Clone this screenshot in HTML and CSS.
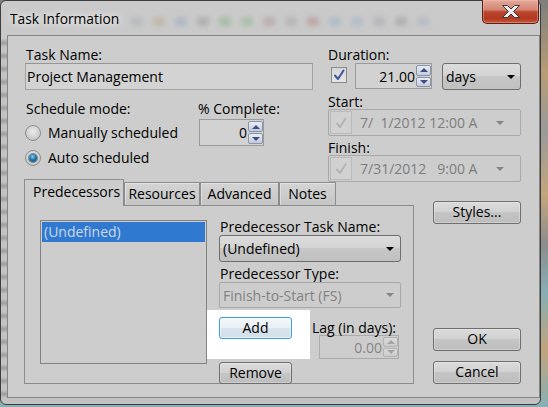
FILE: index.html
```html
<!DOCTYPE html>
<html lang="en">
<head>
<meta charset="utf-8">
<title>Task Information</title>
<link rel="stylesheet" href="styles.css">
</head>
<body>
<div class="window">
  <div class="titlebar">
    <span class="title">Task Information</span>
    <div class="glass" aria-hidden="true">
      <i class="g1"></i><i class="g2"></i><i class="g3"></i><i class="g4"></i><i class="g5"></i><i class="g6"></i><i class="g7"></i><i class="g8"></i><i class="g9"></i><i class="g10"></i><i class="g11"></i><i class="g12"></i><i class="g13"></i><i class="g14"></i>
    </div>
    <div class="close">
      <svg width="18" height="13" viewBox="0 0 18 13"><polygon points="0.5,0.5 5.5,0.5 9,4 12.5,0.5 17.5,0.5 11.5,6.5 17.5,12.5 12.5,12.5 9,9 5.5,12.5 0.5,12.5 6.5,6.5" fill="#ececec" stroke="#3c3c3c" stroke-width="1" stroke-linejoin="round"/></svg>
    </div>
  </div>

  <div class="client">
    <div class="layout">
      <div class="general">
        <div class="lbl name-lbl">Task Name:</div>
        <div class="textbox">Project Management</div>
        <div class="sched-row">
          <div class="sched">
            <div class="lbl">Schedule mode:</div>
            <div class="radios">
              <div class="radio-row"><span class="radio"></span><span>Manually scheduled</span></div>
              <div class="radio-row"><span class="radio on"></span><span>Auto scheduled</span></div>
            </div>
          </div>
          <div class="complete">
            <div class="lbl">% Complete:</div>
            <div class="spin pct">
              <span class="val">0</span>
              <span class="spin-btns"><span class="sb up"></span><span class="sb down"></span></span>
            </div>
          </div>
        </div>
      </div>

      <div class="dates">
        <div class="lbl">Duration:</div>
        <div class="dur-row">
          <span class="chk">
            <svg width="14" height="14" viewBox="0 0 14 14"><path d="M3 7.5 L6 11 L11.5 2.5" fill="none" stroke="#3b569a" stroke-width="2" stroke-linecap="round" stroke-linejoin="round"/></svg>
          </span>
          <div class="spin dur">
            <span class="val">21.00</span>
            <span class="spin-btns"><span class="sb up"></span><span class="sb down"></span></span>
          </div>
          <div class="dd days"><span>days</span><span class="arrow"></span></div>
        </div>
        <div class="lbl small">Start:</div>
        <div class="datefield">
          <span class="dchk">
            <svg width="14" height="14" viewBox="0 0 14 14"><path d="M3 7.5 L6 11 L11.5 2.5" fill="none" stroke="#b3b3b3" stroke-width="2" stroke-linecap="round" stroke-linejoin="round"/></svg>
          </span>
          <span class="dtext">7/  1/2012 12:00 A</span>
          <span class="arrow grey"></span>
        </div>
        <div class="lbl small">Finish:</div>
        <div class="datefield">
          <span class="dchk">
            <svg width="14" height="14" viewBox="0 0 14 14"><path d="M3 7.5 L6 11 L11.5 2.5" fill="none" stroke="#b3b3b3" stroke-width="2" stroke-linecap="round" stroke-linejoin="round"/></svg>
          </span>
          <span class="dtext">7/31/2012   9:00 A</span>
          <span class="arrow grey"></span>
        </div>
      </div>

      <div class="tabs">
        <div class="tabstrip">
          <div class="tab active">Predecessors</div>
          <div class="tab t-res">Resources</div>
          <div class="tab t-adv">Advanced</div>
          <div class="tab t-notes">Notes</div>
        </div>
        <div class="panel">
          <div class="listbox">
            <div class="item sel">(Undefined)</div>
          </div>
          <div class="pred">
            <div class="plbl first">Predecessor Task Name:</div>
            <div class="dd pdd"><span>(Undefined)</span><span class="arrow"></span></div>
            <div class="plbl second">Predecessor Type:</div>
            <div class="dd pdd disabled"><span>Finish-to-Start (FS)</span><span class="arrow grey"></span></div>
            <div class="add-row">
              <div class="highlight"><div class="btn add">Add</div></div>
              <div class="lag">
                <div class="lag-lbl">Lag (in days):</div>
                <div class="spin lagspin disabled">
                  <span class="val">0.00</span>
                  <span class="spin-btns"><span class="sb up"></span><span class="sb down"></span></span>
                </div>
              </div>
            </div>
            <div class="btn remove">Remove</div>
          </div>
        </div>
      </div>

      <div class="side">
        <div class="btn styles">Styles...</div>
        <div class="btn ok">OK</div>
        <div class="btn cancel">Cancel</div>
      </div>
    </div>
  </div>
</div>
</body>
</html>
```

FILE: styles.css
```css
html, body {
  margin: 0;
  padding: 0;
}

body {
  width: 548px;
  height: 407px;
  overflow: hidden;
  font-family: "Open Sans", "Noto Sans", "DejaVu Sans", sans-serif;
  font-size: 14px;
  color: #000;
  background: linear-gradient(#7e7e7e 0%, #b99c74 18%, #9a9a9a 32%, #c4a57c 48%, #8d8d8d 60%, #86aeb4 72%, #c1a47c 86%, #86b0b6 100%);
}

/* ---------- window frame ---------- */
.window {
  width: 541px;
  height: 405px;
  box-sizing: border-box;
  border: 1px solid #3d3d3d;
  border-radius: 6px;
  background:
    repeating-linear-gradient(#c3c3c3 0px, #9e9e9e 4px, #c3c3c3 8px, #c3c3c3 13px) 0 38px / 6px 360px no-repeat,
    linear-gradient(#cacaca, #c2c2c2);
  display: flex;
  flex-direction: column;
}

.titlebar {
  height: 34px;
  display: flex;
  align-items: flex-start;
  padding-left: 9px;
}

.title {
  margin-top: 8px;
  font-size: 13.8px;
  line-height: 19px;
  text-shadow: 0 0 6px rgba(255, 255, 255, 0.95), 0 0 10px rgba(255, 255, 255, 0.7);
}

.glass {
  display: flex;
  gap: 10px;
  margin: 16px 0 0 12px;
  opacity: 0.28;
  filter: blur(2.5px);
}

.glass i {
  display: block;
  width: 12px;
  height: 9px;
  border-radius: 3px;
  background: #8d96a6;
}
.glass .g2 { background: #a88d60; }
.glass .g3 { background: #6f8fc0; }
.glass .g4 { background: #707070; }
.glass .g5 { background: #4f9a4f; }
.glass .g6 { background: #5aa85a; }
.glass .g7 { background: #9a6a6a; }
.glass .g8 { background: #8a8a8a; }
.glass .g9 { background: #a05050; }
.glass .g10 { background: #6a9ac0; }
.glass .g11 { background: #7aa0c8; }
.glass .g12 { background: #8a8a9a; }
.glass .g13 { background: #707070; }
.glass .g14 { background: #8a9ab8; }

.close {
  margin: -1px 1px 0 auto;
  width: 57px;
  height: 24px;
  box-sizing: border-box;
  border: 1px solid #5a2116;
  border-top: none;
  border-radius: 0 0 5px 5px;
  background: linear-gradient(#e3aa9d 0%, #d48572 42%, #b9432b 52%, #b23a22 80%, #c9583a 100%);
  box-shadow: inset 0 0 0 1px rgba(255, 200, 190, 0.35);
  display: flex;
  align-items: center;
  justify-content: center;
}

/* ---------- client area ---------- */
.client {
  margin-left: 6px;
  width: 533px;
  height: 363px;
  box-sizing: border-box;
  border: 1px solid #858585;
  background: #cdcdcd;
  padding: 11px 0 0 16px;
}

.layout {
  display: grid;
  grid-template-columns: 304px 105px 88px;
  grid-template-rows: 132px 205px;
}

.lbl {
  line-height: 16px;
  white-space: nowrap;
}
.lbl.small {
  line-height: 15px;
  margin-top: 4px;
}

/* general column */
.general {
  grid-column: 1;
  grid-row: 1;
}

.name-lbl {
  margin-left: 2px;
}

.textbox {
  margin-left: 1px;
  width: 288px;
  height: 27px;
  box-sizing: border-box;
  border: 1px solid #a3a3a3;
  border-top-color: #959595;
  background: #d3d3d3;
  padding-left: 1px;
  line-height: 25px;
  white-space: nowrap;
}

.sched-row {
  display: flex;
  margin-top: 11px;
}

.sched {
  width: 174px;
}
.sched > .lbl {
  margin-left: 2px;
}

.radios {
  margin-top: 3px;
}

.radio-row {
  height: 25px;
  display: flex;
  align-items: center;
  line-height: 19px;
}

.radio {
  width: 16px;
  height: 16px;
  box-sizing: border-box;
  margin: 0 7px 0 1px;
  border-radius: 50%;
  border: 1px solid #8e8e8e;
  background: radial-gradient(circle at 50% 40%, #ececec 0%, #d2d2d2 55%, #b4b4b4 100%);
  display: flex;
  align-items: center;
  justify-content: center;
}
.radio.on::after {
  content: "";
  width: 8px;
  height: 8px;
  border-radius: 50%;
  background: radial-gradient(circle at 45% 35%, #8fd0ef 0%, #2a7fae 40%, #0b3f62 100%);
  box-shadow: 0 0 0 1px rgba(20, 60, 90, 0.5);
}

.complete .spin {
  margin: 2px 0 0 1px;
}

/* spinners */
.spin {
  display: flex;
  box-sizing: border-box;
  border: 1px solid #9b9b9b;
  background: #d2d2d2;
  line-height: 19px;
}
.spin .val {
  flex: 1;
  align-self: center;
  text-align: right;
  margin-right: 1px;
}
.spin-btns {
  width: 15px;
  display: flex;
  flex-direction: column;
  gap: 1px;
  padding: 1px 0;
}
.sb {
  flex: 1;
  box-sizing: border-box;
  border: 1px solid #8993aa;
  border-radius: 2px;
  background: linear-gradient(#e9edf4, #c3cbdc);
  display: flex;
  align-items: center;
  justify-content: center;
}
.sb.up::after {
  content: "";
  border-left: 4px solid transparent;
  border-right: 4px solid transparent;
  border-bottom: 4px solid #3d4e80;
}
.sb.down::after {
  content: "";
  border-left: 4px solid transparent;
  border-right: 4px solid transparent;
  border-top: 4px solid #3d4e80;
}

.spin.pct {
  width: 65px;
  height: 27px;
}

.spin.disabled {
  border-color: #aaaaaa;
  background: #cdcdcd;
  color: #858585;
}
.spin.disabled .sb {
  border-color: #b3b3b3;
  background: linear-gradient(#dadada, #cbcbcb);
}
.spin.disabled .sb.up::after { border-bottom-color: #a3a3a3; }
.spin.disabled .sb.down::after { border-top-color: #a3a3a3; }

/* dates column */
.dates {
  grid-column: 2 / 4;
  grid-row: 1;
  align-self: start;
}

.dur-row {
  display: flex;
  height: 27px;
}

.chk {
  width: 16px;
  height: 16px;
  box-sizing: border-box;
  margin: 4px 0 0 3px;
  border: 1px solid #8a8a8a;
  background: linear-gradient(#d6d6d6, #e6e6e6);
  display: flex;
  align-items: center;
  justify-content: center;
}

.spin.dur {
  margin-left: 8px;
  width: 77px;
  height: 26px;
}

.dd {
  display: flex;
  align-items: center;
  box-sizing: border-box;
  border: 1px solid #6e6e6e;
  border-radius: 3px;
  background: linear-gradient(#dcdcdc 0%, #d3d3d3 49%, #c7c7c7 50%, #c0c0c0 100%);
  padding-left: 3px;
  line-height: 19px;
  white-space: nowrap;
}
.dd.days {
  margin-left: 10px;
  width: 79px;
  height: 27px;
}
.dd.days .arrow {
  margin-right: 5px;
}

.arrow {
  margin-left: auto;
  width: 0;
  height: 0;
  border-left: 4px solid transparent;
  border-right: 4px solid transparent;
  border-top: 4px solid #000;
}
.arrow.grey {
  border-top-color: #858585;
}

.datefield {
  width: 193px;
  height: 27px;
  box-sizing: border-box;
  border: 1px solid #a9a9a9;
  border-radius: 2px;
  display: flex;
  align-items: center;
  line-height: 19px;
}
.dchk {
  width: 22px;
  height: 23px;
  box-sizing: border-box;
  margin-left: 1px;
  border: 1px solid #bababa;
  background: #d1d1d1;
  display: flex;
  align-items: center;
  justify-content: center;
}
.dtext {
  margin-left: 8px;
  color: #7d7d7d;
  white-space: pre;
}
.datefield .arrow {
  margin-right: 16px;
}

/* tabs */
.tabs {
  grid-column: 1 / 3;
  grid-row: 2;
  width: 390px;
}

.tabstrip {
  display: flex;
  align-items: flex-end;
  height: 26px;
}

.tab {
  box-sizing: border-box;
  border: 1px solid #8c8c8c;
  border-bottom: none;
  height: 23px;
  line-height: 19px;
  padding-top: 1px;
  text-align: center;
  white-space: nowrap;
  background: linear-gradient(#d4d4d4, #c5c5c5);
  box-shadow: inset 1px 1px 0 rgba(255, 255, 255, 0.35);
}
.tab.active {
  position: relative;
  z-index: 1;
  width: 100px;
  height: 27px;
  margin-bottom: -1px;
  padding-top: 2px;
  padding-left: 8px;
  text-align: left;
  background: #cdcdcd;
  box-shadow: none;
}
.t-res { width: 76px; }
.t-adv { width: 79px; }
.t-notes { width: 57px; }

.panel {
  height: 179px;
  box-sizing: border-box;
  border: 1px solid #8c8c8c;
  display: flex;
  align-items: flex-start;
  padding: 14px 0 0 15px;
}

.listbox {
  width: 167px;
  height: 144px;
  box-sizing: border-box;
  border: 1px solid #828282;
  padding: 1px;
}
.item {
  height: 20px;
  line-height: 20px;
  padding-left: 2px;
  white-space: nowrap;
}
.item.sel {
  background: #2f7ad0;
  color: #cfd8e5;
}

.pred {
  display: flex;
  flex-direction: column;
  align-items: flex-start;
}

.plbl {
  padding-left: 13px;
  white-space: nowrap;
}
.plbl.first {
  line-height: 13px;
}
.plbl.second {
  line-height: 17px;
  margin-top: 3px;
}

.dd.pdd {
  margin: 2px 0 0 12px;
  width: 182px;
  height: 27px;
}
.dd.pdd .arrow {
  margin-right: 6px;
}
.dd.pdd.disabled {
  margin-top: 0;
  height: 26px;
  border-color: #a8a8a8;
  border-radius: 2px;
  background: #cdcdcd;
  color: #828282;
}

.add-row {
  display: flex;
  margin-top: 2px;
}

.highlight {
  background: #ffffff;
  padding: 7px 18px 8px 12px;
}

.lag {
  margin-left: 2px;
}
.lag-lbl {
  margin-top: 10px;
  height: 15px;
  line-height: 15px;
  white-space: nowrap;
}
.spin.lagspin {
  margin-left: 7px;
  width: 80px;
  height: 24px;
}

/* buttons */
.btn {
  box-sizing: border-box;
  height: 23px;
  border: 1px solid #6f6f6f;
  border-radius: 3px;
  background: linear-gradient(#dbdbdb 0%, #d1d1d1 49%, #c5c5c5 50%, #bdbdbd 100%);
  box-shadow: inset 0 0 0 1px rgba(255, 255, 255, 0.25);
  text-align: center;
  line-height: 20px;
  white-space: nowrap;
}
.btn.add {
  width: 73px;
  height: 22px;
  border-color: #3a9edb;
  background: linear-gradient(#f4f8fb 0%, #e8eff5 49%, #d9e5ee 50%, #d2dfe9 100%);
  box-shadow: inset 0 0 0 1px rgba(255, 255, 255, 0.6);
}
.btn.remove {
  width: 73px;
  height: 22px;
  margin: 3px 0 0 12px;
}

.side {
  grid-column: 3;
  grid-row: 2;
  display: flex;
  flex-direction: column;
  padding-top: 22px;
}
.btn.styles { width: 88px; }
.btn.ok { width: 88px; margin-top: 104px; }
.btn.cancel { width: 88px; margin-top: 10px; }
```
